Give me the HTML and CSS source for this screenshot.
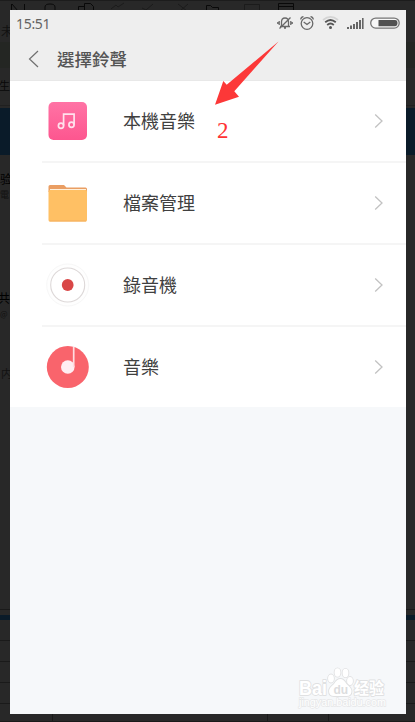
FILE: index.html
```html
<!DOCTYPE html>
<html lang="zh-Hant">
<head>
<meta charset="utf-8">
<title>選擇鈴聲</title>
<link rel="stylesheet" href="styles.css">
</head>
<body>
<svg class="backdrop" width="415" height="722" viewBox="0 0 415 722" aria-hidden="true">
  <rect width="415" height="722" fill="#282828"/>
  <path d="M0 .5H415" stroke="#1c1c1c"/>
  <rect y="42" width="415" height="26" fill="#242623"/>
  <path d="M0 105.5H415" stroke="#202020"/>
  <rect y="108" width="415" height="47" fill="#0a1b29"/>
  <path d="M0 609.5H415M0 640.5H415M0 661.5H415M0 682.5H415M0 703.5H415M0 721.5H415M52.5 714V722M267.5 714V722M328.5 714V722" stroke="#1a1a1a"/>
  <rect y="615" width="415" height="5" fill="#0a1b29"/>
  <g fill="none" stroke="#090909">
    <path d="M11.5 4V10M12 4l6 7M24.5 4V10" />
    <path d="M45 10V7q0-3 5-3t5 3v3M78.500 10V6.500h6M84.500 10V3.500h6l3 3V10M206.500 10V5.500h4l2 2h6V10"/>
    <path d="M278.500 10V3.500h15V10M278 6.500h16"/>
    <path d="M111 9l5-4 2 2 6-4M142 8l4 2 7-6M178 4l9 7M188 4l-8 7M244.500 10V4.500h15V10" stroke="#1b1b1b"/>
  </g>
  <g class="behind-text">
    <text x="1" y="36" font-size="12" fill="#111">未</text>
    <text x="-1" y="90" font-size="11" fill="#080808">生</text>
    <text x="0" y="184" font-size="12" fill="#000">验</text>
    <text x="0" y="198" font-size="9" fill="#111">電</text>
    <text x="-2" y="303" font-size="12" fill="#000">共</text>
    <text x="0" y="317" font-size="8" fill="#111">@</text>
    <text x="1" y="378" font-size="11" fill="#111">内</text>
  </g>
</svg>

<main class="phone">
  <header class="header">
    <div class="status">
      <span class="time">15:51</span>
      <svg class="status-icons" width="128" height="20" viewBox="0 0 128 20" aria-hidden="true">
        <g fill="none" stroke="#696969" stroke-width="1.3">
          <path d="M3 13.500h10M4.500 13V9q0-4 3.500-4t3.500 4v4M7 15h2M2.200 8v4M.8 9v2M13.800 8v4M15.200 9v2M2.500 15.500L13.500 4.500"/>
          <circle cx="30" cy="10.500" r="5.800"/>
          <path d="M26.700 9l3.300 2.500L33.300 9M23.700 6.500Q24 4 26.500 3.700M33.500 3.700Q36 4 36.300 6.500"/>
          <path d="M46 7Q53.500.8 61 7" stroke="#d4d4d4" stroke-width="1.700"/>
          <path d="M48.200 9.300Q53.500 4.700 58.800 9.300M50.200 12Q53.500 9 56.800 12" stroke="#555" stroke-width="1.800"/>
        </g>
        <circle cx="53.500" cy="14.500" r="1.500" fill="#555"/>
        <path d="M70 14h2v2h-2zM73 12.500h2V16h-2zM76 11h2v5h-2zM79 9h2v7h-2zM82 7h2v9h-2zM85 5h1.600v11H85z" fill="#666"/>
        <rect x="93.700" y="5.100" width="28.500" height="10" rx="5" fill="#f7f7f7" stroke="#757575" stroke-width="1.300"/>
        <path d="M101.500 7H118q2.500 0 2.500 3.100T118 13.200h-16.500z" fill="#515151"/>
      </svg>
    </div>
    <div class="title-bar">
      <svg width="12" height="20" viewBox="0 0 12 20" aria-hidden="true"><path d="M10 2L1.500 10l8.500 8" fill="none" stroke="#707070" stroke-width="1.200"/></svg>
      <h1>選擇鈴聲</h1>
    </div>
  </header>

  <ul class="list">
    <li class="row">
      <svg class="icon" width="44" height="44" viewBox="0 0 44 44" aria-hidden="true">
        <defs><linearGradient id="pink" x2="0" y2="1"><stop stop-color="#ff73a5"/><stop offset="1" stop-color="#fd568f"/></linearGradient></defs>
        <rect x="2.500" y="3" width="38.500" height="38" rx="5" fill="url(#pink)"/>
        <g fill="none" stroke="#ffe1ec" stroke-width="1.700"><circle cx="15" cy="26.700" r="2.600"/><circle cx="25.500" cy="25.700" r="2.600"/><path d="M17.600 26.500V15.200h10.500v10.500"/></g>
      </svg>
      <span class="label">本機音樂</span>
      <svg class="chevron" width="10" height="16" viewBox="0 0 10 16"><path d="M1.200 1.500L8 8l-6.800 6.500"/></svg>
    </li>
    <li class="row">
      <svg class="icon" width="44" height="44" viewBox="0 0 44 44" aria-hidden="true">
        <path d="M2.500 11V5.500q0-1.500 1.500-1.500h14l2.500 2.500H39.500q1.500 0 1.500 1.500v4z" fill="#ea9e63"/>
        <path d="M4 8.500H40" stroke="#fff0da"/>
        <rect x="2.500" y="9" width="38.500" height="31.500" rx="1.500" fill="#ffc064"/>
        <path d="M3.500 40h36.500" stroke="#f3af61"/>
      </svg>
      <span class="label">檔案管理</span>
      <svg class="chevron" width="10" height="16" viewBox="0 0 10 16"><path d="M1.200 1.500L8 8l-6.800 6.500"/></svg>
    </li>
    <li class="row">
      <svg class="icon" width="44" height="44" viewBox="0 0 44 44" aria-hidden="true">
        <circle cx="21.700" cy="22" r="21" fill="#fefefe" stroke="#f7f7f7"/>
        <circle cx="21.700" cy="22" r="17" fill="#fff" stroke="#ddd8d8" stroke-width="1.100"/>
        <circle cx="21.700" cy="22" r="5.900" fill="#d94747"/>
      </svg>
      <span class="label">錄音機</span>
      <svg class="chevron" width="10" height="16" viewBox="0 0 10 16"><path d="M1.200 1.500L8 8l-6.800 6.500"/></svg>
    </li>
    <li class="row">
      <svg class="icon" width="44" height="44" viewBox="0 0 44 44" aria-hidden="true">
        <circle cx="21.800" cy="22" r="21" fill="#f9646c"/>
        <circle cx="21.800" cy="22" r="6.800" fill="#ffedf2"/>
        <path d="M27.700 1.800V22" stroke="#ffdce1" stroke-width="1.700"/>
      </svg>
      <span class="label">音樂</span>
      <svg class="chevron" width="10" height="16" viewBox="0 0 10 16"><path d="M1.200 1.500L8 8l-6.800 6.500"/></svg>
    </li>
  </ul>
</main>

<svg class="pointer" width="66" height="66" viewBox="0 0 66 66" aria-hidden="true"><path d="M64.500 1.500L12.700 44.700 9.300 41 1 64.700l24-8-4.700-5.400z" fill="#fc3838"/></svg>
<span class="step">2</span>

<svg class="watermark" width="94" height="48" viewBox="0 0 94 48" aria-hidden="true">
  <g fill="#fff" stroke="#e0e1e2" stroke-width="1.800" paint-order="stroke" stroke-linejoin="round">
    <text x="2" y="28" font-size="20" font-weight="700" textLength="28" lengthAdjust="spacingAndGlyphs">Bai</text>
    <ellipse cx="34" cy="11.500" rx="2.900" ry="4"/><ellipse cx="40.500" cy="5.500" rx="2.900" ry="4.200"/><ellipse cx="48.500" cy="6" rx="2.900" ry="4.200"/><ellipse cx="53" cy="14" rx="2.900" ry="4"/>
    <path d="M43.500 12q3 0 6 5 5 4 5 7 0 5-5 5H37q-5 0-5-5 0-3 5-7 3-5 6.500-5z"/>
    <text x="57" y="27" font-size="15.500" font-weight="700" textLength="30" lengthAdjust="spacingAndGlyphs">经验</text>
  </g>
  <text x="36.500" y="27" font-size="12" font-weight="700" fill="#dcddde">du</text>
  <text x="2" y="39" font-size="10" fill="#fff" stroke="#e6e7e8" stroke-width="1.300" paint-order="stroke" textLength="87" lengthAdjust="spacingAndGlyphs">jingyan.baidu.com</text>
</svg>
</body>
</html>
```
FILE: styles.css
```css
* { box-sizing: border-box; }
html, body { margin: 0; height: 722px; overflow: hidden; }
body {
  position: relative;
  padding: 10px 9px 8px 10px;
  background: #282828;
  font-family: "Noto Sans", "Noto Sans CJK TC", sans-serif;
}
.backdrop { position: absolute; left: 0; top: 0; }
.behind-text { font-family: "Noto Sans CJK SC", sans-serif; }
.phone {
  position: relative;
  width: 396px;
  height: 704px;
  background: #f6f8fa;
}
.header { height: 71px; background: #eee; border-bottom: 1px solid #e8e8e8; }
.status {
  display: flex;
  justify-content: space-between;
  height: 28px;
  padding: 3px 1px 0 6px;
}
.time { font-size: 14px; line-height: 22px; color: #636363; letter-spacing: -.3px; }
.title-bar { display: flex; align-items: center; height: 41px; padding-left: 18px; gap: 17px; }
h1 {
  margin: 0;
  font: 500 17.500px/26px "Noto Sans CJK TC", sans-serif;
  color: #555;
}
.list { margin: 0; padding: 0; list-style: none; background: #fff; }
.row {
  position: relative;
  display: flex;
  align-items: center;
  height: 82px;
  padding: 0 22px 2px 36px;
}
.row:last-child { height: 80px; padding-bottom: 0; }
.row:not(:last-child)::after {
  content: "";
  position: absolute;
  left: 32px;
  right: 0;
  bottom: 0;
  height: 2px;
  background: #f5f5f5;
}
.icon { flex: none; }
.label {
  flex: 1;
  margin-left: 33px;
  padding-bottom: 2px;
  font: 400 18px/28px "Noto Sans CJK TC", sans-serif;
  color: #404040;
}
.chevron { fill: none; stroke: #c2c2c2; stroke-width: 1.300; }
.pointer { position: absolute; left: 214px; top: 40px; }
.step {
  position: absolute;
  left: 217px;
  top: 117px;
  font: 23px/28px "Liberation Serif", serif;
  color: #f33;
}
.watermark { position: absolute; left: 297px; top: 667px; font-family: "Liberation Sans", "Noto Sans CJK SC", sans-serif; }
```
